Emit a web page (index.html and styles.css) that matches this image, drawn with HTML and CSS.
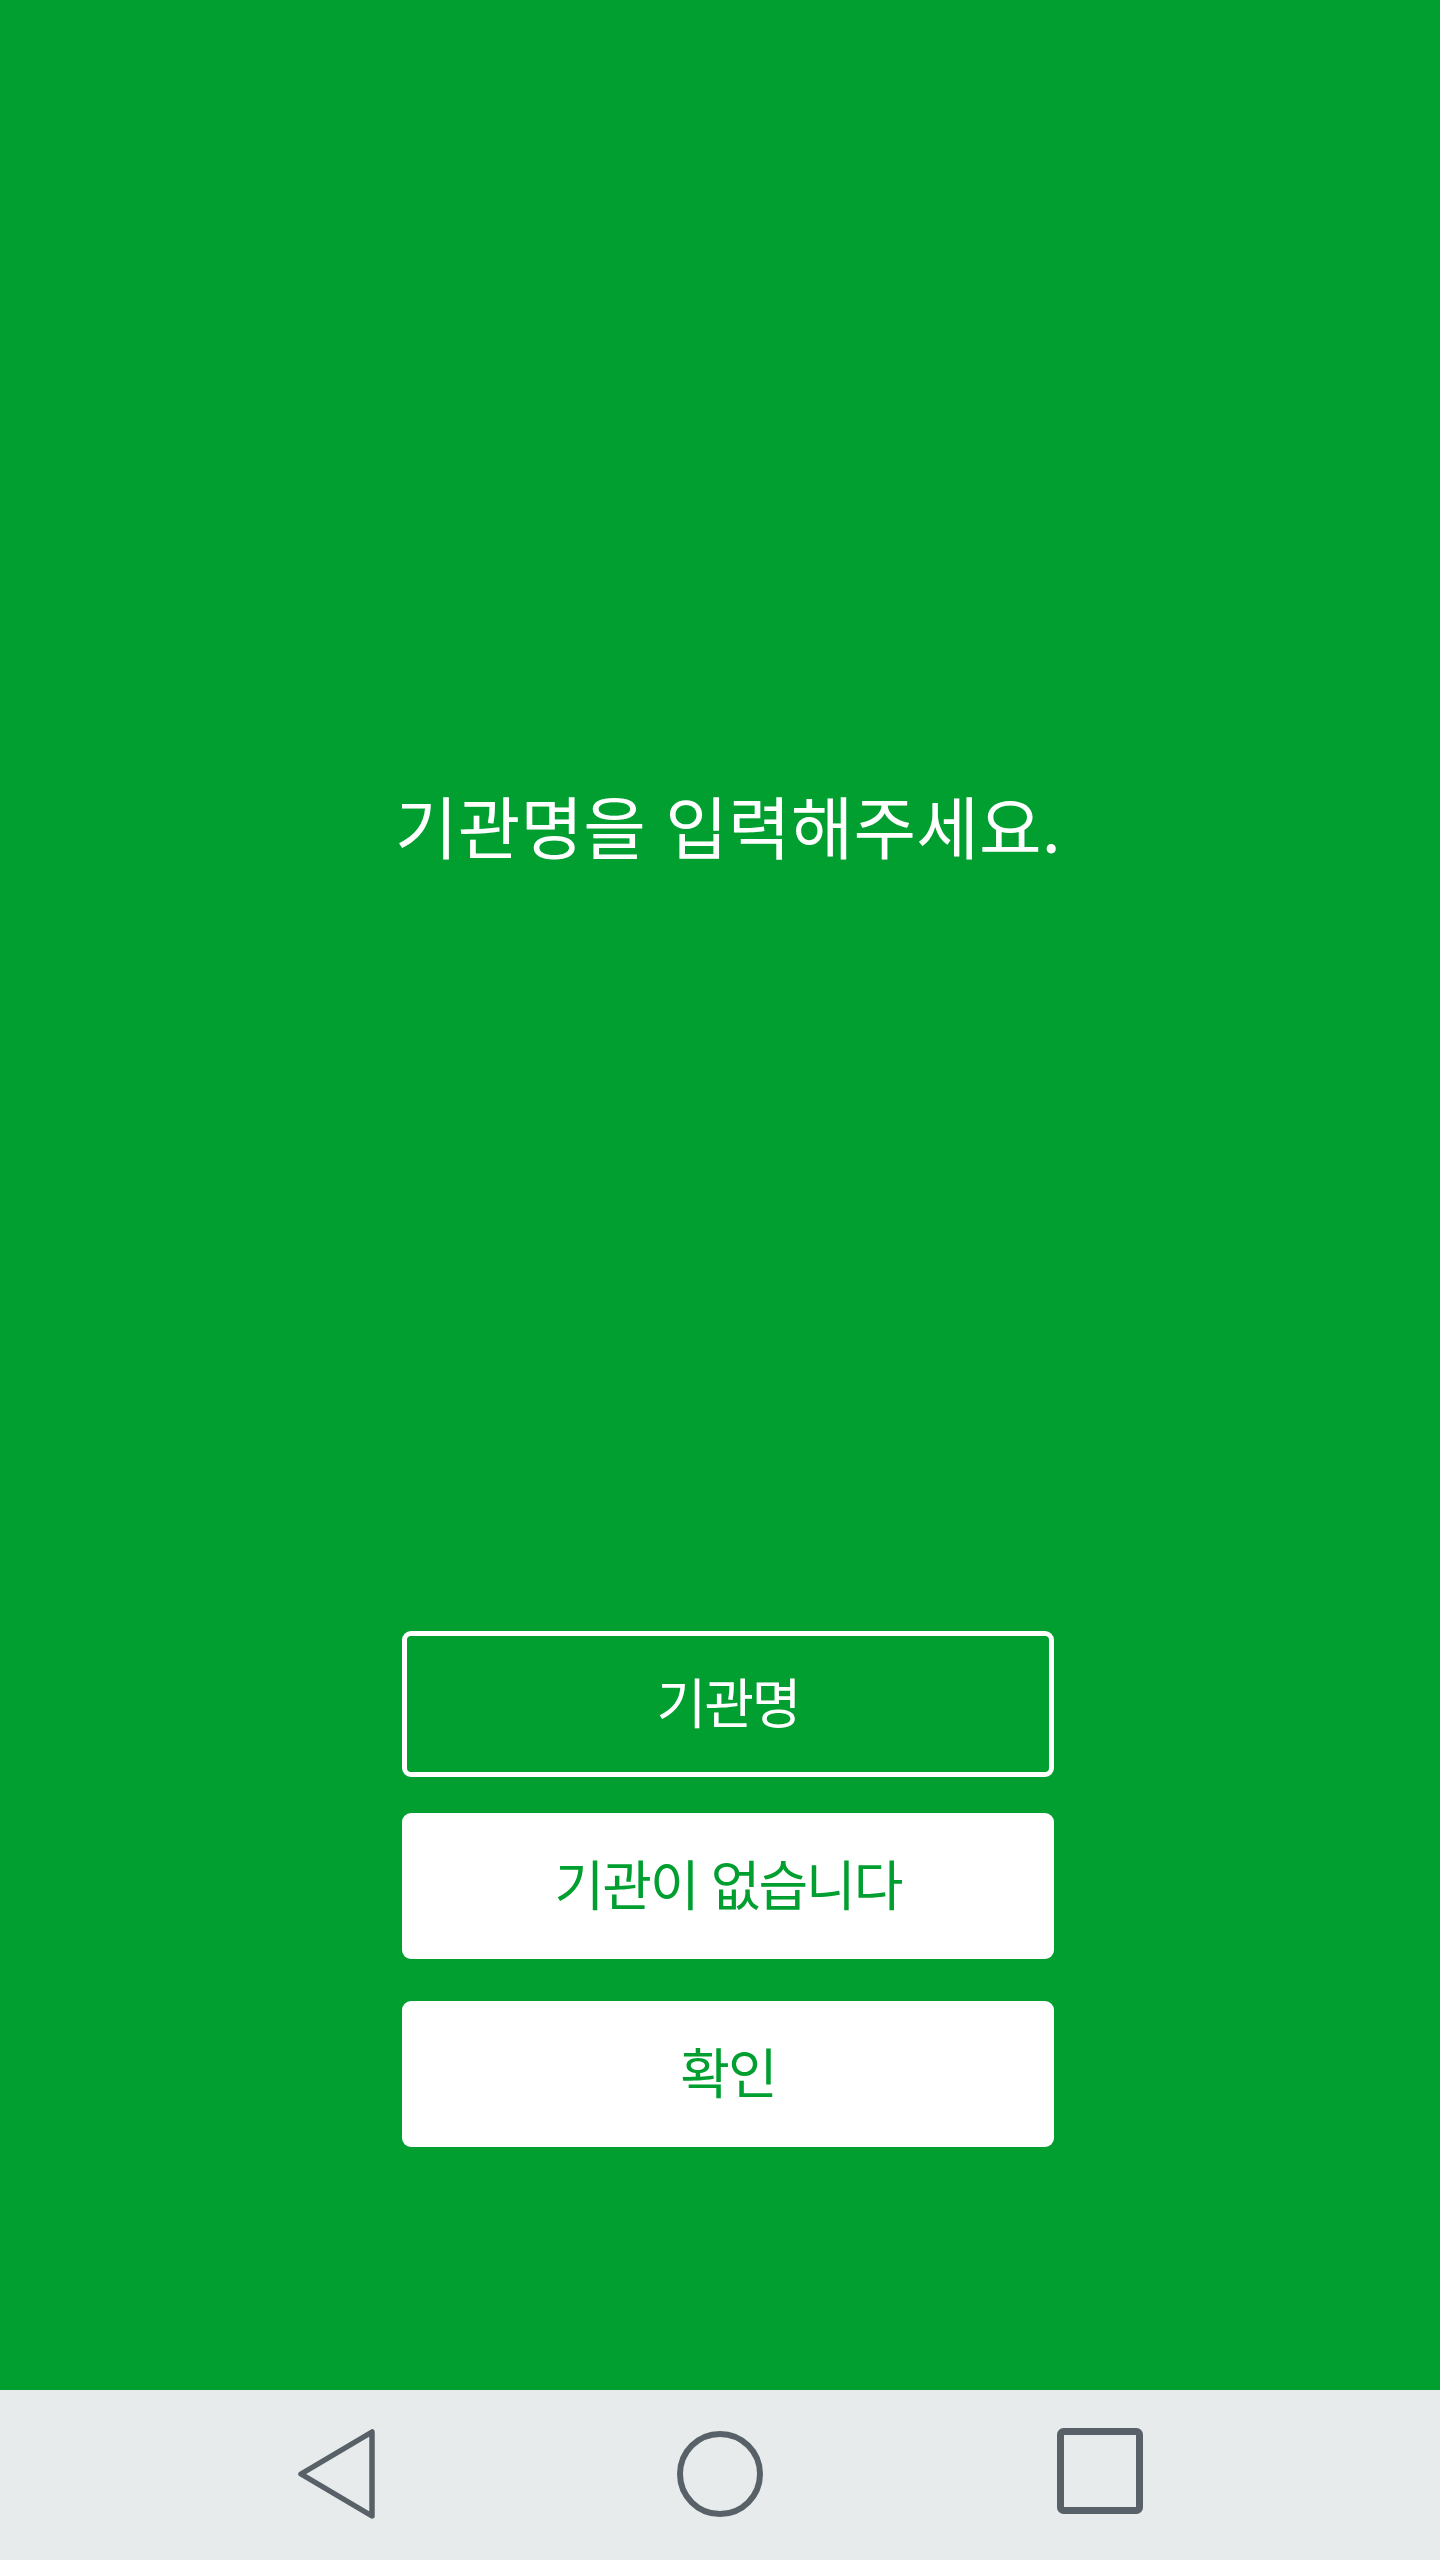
FILE: index.html
```html
<!DOCTYPE html>
<html lang="ko">
<head>
<meta charset="utf-8">
<title>기관명</title>
<link rel="stylesheet" href="styles.css">
</head>
<body>
<div class="screen">
  <main class="main">
    <h1 class="title">기관명을 입력해주세요.</h1>
    <div class="actions">
      <div class="btn btn-outline">기관명</div>
      <div class="btn btn-solid btn-second">기관이 없습니다</div>
      <div class="btn btn-solid btn-third">확인</div>
    </div>
  </main>
  <nav class="navbar">
    <svg class="nav-icon" width="90" height="100" viewBox="0 0 90 100">
      <path d="M77 8 L77 92 L6 50 Z" fill="none" stroke="#596168" stroke-width="5.5" stroke-linejoin="round"/>
    </svg>
    <svg class="nav-icon" width="90" height="100" viewBox="0 0 90 100">
      <circle cx="45" cy="50" r="40" fill="none" stroke="#596168" stroke-width="6"/>
    </svg>
    <svg class="nav-icon" width="90" height="100" viewBox="0 0 90 100">
      <rect x="5.5" y="7.5" width="79" height="79" rx="3" fill="none" stroke="#596168" stroke-width="7"/>
    </svg>
  </nav>
</div>
</body>
</html>
```

FILE: styles.css
```css
html, body {
  margin: 0;
  padding: 0;
}
body {
  font-family: "Noto Sans CJK KR", "Noto Sans", sans-serif;
  background: #009f30;
}
.screen {
  width: 1440px;
  height: 2560px;
  display: flex;
  flex-direction: column;
}
.main {
  height: 2390px;
  background: #009f30;
  display: flex;
  flex-direction: column;
  align-items: center;
  padding-left: 16px;
  box-sizing: border-box;
}
.title {
  margin: 785px 0 0 0;
  font-size: 68px;
  font-weight: 400;
  line-height: 80px;
  letter-spacing: 0.2px;
  color: #ffffff;
}
.actions {
  margin-top: 766px;
  width: 652px;
  display: flex;
  flex-direction: column;
}
.btn {
  height: 146px;
  border-radius: 9px;
  box-sizing: border-box;
  display: flex;
  align-items: center;
  justify-content: center;
  font-size: 54px;
  letter-spacing: -2px;
  padding-bottom: 8px;
}
.btn-outline {
  border: 5px solid #ffffff;
  color: #ffffff;
}
.btn-solid {
  background: #ffffff;
  color: #009f30;
}
.btn-second {
  margin-top: 36px;
}
.btn-third {
  margin-top: 42px;
}
.navbar {
  height: 170px;
  background: #e8ebec;
  display: flex;
  align-items: center;
  justify-content: center;
  gap: 290px;
  padding-bottom: 2px;
  box-sizing: border-box;
}
.nav-icon {
  display: block;
}
```
